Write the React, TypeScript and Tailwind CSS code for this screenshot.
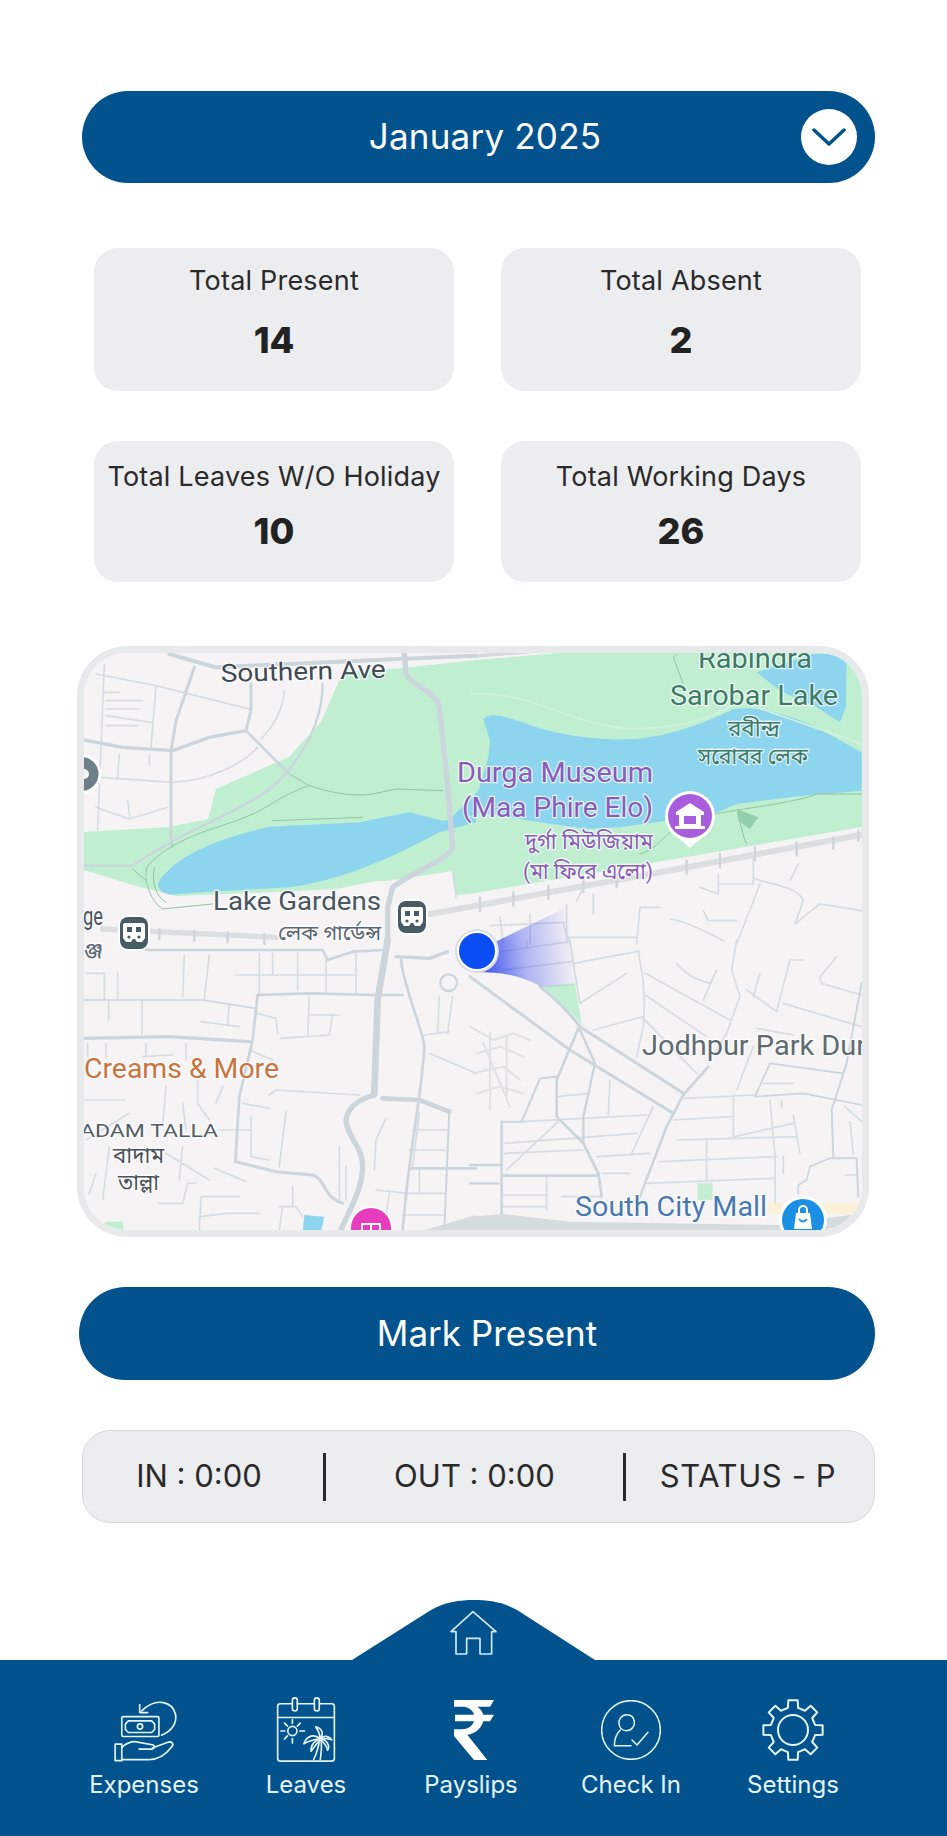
import type { ReactNode } from "react"

const BLUE = "#01528d"
const LINE = "#e6f4fd"

const stats = [
  [
    { label: "Total Present", value: "14", gap: "pt-[15px]", numGap: "mt-[19px]" },
    { label: "Total Absent", value: "2", gap: "pt-[15px]", numGap: "mt-[19px]" },
  ],
  [
    { label: "Total Leaves W/O Holiday", value: "10", gap: "pt-[18px]", numGap: "mt-[14px]" },
    { label: "Total Working Days", value: "26", gap: "pt-[18px]", numGap: "mt-[14px]" },
  ],
]

// gear outline, 8 teeth, drawn around 0,0
const gearPath = (() => {
  const pts: string[] = []
  const pt = (deg: number, r: number) => {
    const a = ((deg - 90) * Math.PI) / 180
    return `${(r * Math.cos(a)).toFixed(1)} ${(r * Math.sin(a)).toFixed(1)}`
  }
  for (let i = 0; i < 8; i++) {
    const a = i * 45
    pts.push(pt(a - 13, 68), pt(a - 9, 90), pt(a + 9, 90), pt(a + 13, 68))
  }
  return "M" + pts.join(" L") + " Z"
})()

const ExpensesIcon = () => (
  <svg width="70" height="68" viewBox="60 50 210 205" fill="none" stroke={LINE} strokeWidth="5" strokeLinecap="round" strokeLinejoin="round">
    <rect x="98" y="112" width="112" height="60" rx="4" />
    <path d="M118 125 H188 L197 134 V151 L188 160 H118 L109 151 V134 Z" />
    <circle cx="153" cy="142" r="8" />
    <path d="M218 168 C250 155 265 130 260 105 C252 70 205 50 158 95" />
    <path d="M152 76 L152 100 L176 100" />
    <path d="M78 195 H98 V245 H78 Z" />
    <path d="M98 205 C115 190 135 185 150 190 L190 197 C202 200 196 212 185 210 L150 210" />
    <path d="M190 207 L235 190 C250 185 256 195 248 204 C225 235 200 243 175 242 L98 242" />
  </svg>
)

const LeavesIcon = () => (
  <svg width="60" height="66" viewBox="555 50 183 200" fill="none" stroke={LINE} strokeWidth="5" strokeLinecap="round" strokeLinejoin="round">
    <path d="M605 70 H568 Q560 70 560 78 V237 Q560 245 568 245 H725 Q733 245 733 237 V78 Q733 70 725 70 H688 M620 70 H672" />
    <path d="M560 112 H733" />
    <rect x="605" y="52" width="15" height="40" rx="7.5" />
    <rect x="672" y="52" width="15" height="40" rx="7.5" />
    <circle cx="605" cy="153" r="14" />
    <path d="M605 118 V130 M605 176 V190 M570 153 H582 M628 153 H642 M581 129 L590 138 M629 129 L620 138 M581 177 L590 168" />
    <path d="M670 240 C682 215 686 195 688 178 M690 240 C694 215 695 195 692 178" />
    <path d="M690 176 C672 162 650 165 640 192 C655 182 668 180 690 176 Z" />
    <path d="M690 176 C675 180 660 195 662 215 C672 200 680 192 690 176 Z" />
    <path d="M690 176 C700 190 712 198 712 212 C722 198 708 178 690 176 Z" />
    <path d="M690 176 C705 165 715 168 725 180 C712 176 702 176 690 176 Z" />
    <path d="M690 176 C688 160 682 148 676 140 C695 145 702 160 690 176 Z" />
  </svg>
)

const RupeeIcon = () => (
  <svg width="40" height="60" viewBox="100 328 120 180" fill="#ffffff" className="ml-[6px]">
    <path d="M100 328 H220 L208 348 H170 C180 355 185 362 188 372 H220 L208 392 H188 C180 420 155 432 140 432 L200 508 H160 L100 436 V416 H125 C140 416 155 408 160 392 H103 V372 H160 C155 355 140 348 125 348 H100 Z" />
  </svg>
)

const CheckInIcon = () => (
  <svg width="60" height="60" viewBox="542 328 180 180" fill="none" stroke={LINE} strokeWidth="4.5" strokeLinecap="round" strokeLinejoin="round">
    <circle cx="632" cy="418" r="88" />
    <path d="M620 372 C602 372 594 388 596 400 C598 412 606 420 618 420 C634 420 644 406 642 392 C640 380 632 372 620 372 Z" />
    <path d="M600 418 C588 430 582 445 582 465 H632" />
    <path d="M635 448 L650 463 L683 425" />
  </svg>
)

const SettingsIcon = () => (
  <svg width="62" height="62" viewBox="-93 -93 186 186" fill="none" stroke={LINE} strokeWidth="6" strokeLinejoin="round">
    <path d={gearPath} />
    <circle cx="0" cy="0" r="45" />
  </svg>
)

const navItems = [
  { label: "Expenses", icon: <ExpensesIcon />, width: "w-[162px]" },
  { label: "Leaves", icon: <LeavesIcon />, width: "w-[162px]" },
  { label: "Payslips", icon: <RupeeIcon />, width: "w-[168px]" },
  { label: "Check In", icon: <CheckInIcon />, width: "w-[152px]" },
  { label: "Settings", icon: <SettingsIcon />, width: "w-[172px]" },
]

type Road = [string, number]

// paths are in the coordinates of a 3x crop, so each group gets scaled back
const Quad = ({ x, y, children }: { x: number; y: number; children: ReactNode }) => (
  <g transform={`translate(${x} ${y}) scale(0.3333)`} fill="none" strokeLinecap="round" strokeLinejoin="round">
    {children}
  </g>
)

const Roads = ({ thick, thin }: { thick: Road[]; thin: string }) => (
  <>
    <path d={thin} stroke="#d6dce1" strokeWidth="5" />
    {thick.map(([d, w], i) => (
      <path key={i} d={d} stroke="#ccd5dc" strokeWidth={w} />
    ))}
  </>
)

type LabelProps = {
  x: number
  y: number
  size: number
  color: string
  width?: number
  rotate?: number
  children: string
}

const Label = ({ x, y, size, color, width, rotate, children }: LabelProps) => (
  <text
    x={x}
    y={y}
    fontSize={size}
    fill={color}
    stroke="#ffffff"
    strokeWidth="2.5"
    strokeOpacity="0.75"
    textLength={width}
    lengthAdjust={width ? "spacingAndGlyphs" : undefined}
    transform={rotate ? `rotate(${rotate} ${x} ${y})` : undefined}
    className="[paint-order:stroke] font-['Roboto','Noto_Sans','Noto_Sans_Bengali',sans-serif]"
  >
    {children}
  </text>
)

const BusStop = ({ x, y }: { x: number; y: number }) => (
  <g>
    <rect x={x - 16} y={y - 18} width="32" height="36" rx="10" fill="#ffffff" />
    <rect x={x - 14} y={y - 16} width="28" height="32" rx="8" fill="#465b66" />
    <path d={`M${x - 9} ${y - 10} h18 a2 2 0 0 1 2 2 v13 l-3 4 h-5 l-2 -3 h-2 l-2 3 h-5 l-3 -4 v-13 a2 2 0 0 1 2 -2 z`} fill="#ffffff" />
    <rect x={x - 7} y={y - 6} width="5" height="5" fill="#465b66" />
    <rect x={x + 2} y={y - 6} width="5" height="5" fill="#465b66" />
    <circle cx={x - 5} cy={y + 4} r="1.6" fill="#465b66" />
    <circle cx={x + 5} cy={y + 4} r="1.6" fill="#465b66" />
  </g>
)

const MapView = () => (
  <svg viewBox="84 653 778 577" className="block w-full h-full" preserveAspectRatio="none">
    <defs>
      <linearGradient id="beam" gradientUnits="userSpaceOnUse" x1="484" y1="948" x2="572" y2="935">
        <stop offset="0" stopColor="#1f35ee" stopOpacity="0.8" />
        <stop offset="0.45" stopColor="#2f45ee" stopOpacity="0.35" />
        <stop offset="1" stopColor="#2f45ee" stopOpacity="0" />
      </linearGradient>
    </defs>

    <rect x="84" y="653" width="778" height="577" fill="#f5f3f4" />

    {/* park and lakes */}
    <path
      d="M343 672 L402 668 L476 660 L560 653 L862 653 L862 827 L470 894 L456 895 L453 871 L386 881 L376 881 L336 889 L276 892 L176 896 L136 886 L84 870 L84 832 L169 827 L208 819 L216 789 L289 757 L321 722 Z"
      fill="#bfefd0"
    />
    <Quad x={76} y={644}>
      <path
        d="M250 710 C300 640 400 590 580 548 L850 535 L1000 505 L1100 530 L1170 518 L1200 520 L1200 535 L1090 565 C950 640 800 710 640 730 L380 745 L280 752 C250 745 240 725 250 710 Z"
        fill="#8dd5ee"
      />
    </Quad>
    <Quad x={470} y={644}>
      <path
        d="M40 225 C60 205 90 210 200 250 C300 280 400 290 500 285 C600 275 700 240 790 195 C860 185 950 210 1040 250 L1175 325 V440 L1000 455 L800 480 L730 510 L590 530 L450 550 L350 555 L180 530 L30 505 L-30 530 L-60 525 L25 440 L55 340 L60 290 Z"
        fill="#8dd5ee"
      />
      <path d="M1030 30 L860 85 L930 140 L1040 190 L1110 235 L1128 190 L1130 30 Z" fill="#8dd5ee" />
      <path d="M0 150 C200 140 300 250 500 255 C650 250 720 220 780 190 M860 190 L1175 300" stroke="#d2f2de" strokeWidth="5" />
      <path d="M600 565 C570 590 550 620 510 630 M730 510 C850 490 1000 470 1040 450 L1175 450 M805 500 C810 540 820 580 830 600 M620 30 L610 40 L640 120" stroke="#8fc4a5" strokeWidth="3" />
      <path d="M800 495 L865 520 L840 555 L805 530 Z" fill="#93ceac" />
      <path d="M0 38 L170 24" stroke="#d3d9de" strokeWidth="10" />
    </Quad>

    {/* roads, top left */}
    <Quad x={76} y={644}>
      <path
        d="M640 390 L700 425 C760 445 830 460 890 450 L960 435 L1100 440 M700 425 C620 450 580 490 530 510 C450 550 300 570 215 665 C200 700 220 770 260 795 L410 780 M235 670 C225 710 240 760 270 775 M170 675 L210 710 M285 590 L290 610 M590 530 L860 520"
        stroke="#8fc4a5"
        strokeWidth="3"
      />
      <Roads
        thin="M60 90 L240 125 L520 195 M85 60 L65 560 M240 125 L225 310 M85 145 H130 M90 170 H200 M90 195 H190 M90 215 L225 235 M90 245 H185 M130 330 L125 400 M75 400 L290 415 C400 410 500 360 545 310 M625 140 C620 200 590 250 555 285 M220 330 V365 M60 490 L160 525 L275 490 M155 470 L162 525 M1130 680 L1140 760"
        thick={[
          ["M280 30 L420 70 L640 60 L970 45 L1200 35", 12],
          ["M985 30 L990 90 C1010 130 1080 140 1090 190 L1115 420 L1130 610 C1130 640 1000 690 950 730 L935 790 V900", 16],
          ["M355 70 L300 230 L285 320 L285 590", 9],
          ["M24 288 L140 310 L290 320 L400 280 L510 260", 10],
          ["M525 120 V200 L510 260", 9],
          ["M510 260 L640 390", 8],
          ["M740 120 C740 230 690 320 620 400 C540 490 350 540 170 665 L24 665", 7],
        ]}
      />
      <path d="M80 855 L600 880" stroke="#dcdee0" strokeWidth="16" />
      <path d="M250 855 V885 M355 860 V890 M455 865 V895 M565 870 V900" stroke="#cfd4d8" strokeWidth="7" />
    </Quad>

    {/* railway and small streets, top right */}
    <Quad x={470} y={644}>
      <path d="M-120 810 L640 672 L1175 572" stroke="#dcdee0" strokeWidth="18" />
      <path d="M30 760 V800 M130 745 V785 M235 725 V765 M340 705 V745 M440 690 V730 M650 650 V690 M750 630 V670 M855 610 V650 M980 595 V635 M1090 580 V615 M1165 560 V590" stroke="#cfd4d8" strokeWidth="7" />
      <Roads
        thin="M370 750 V810 M180 810 V900 M60 845 L290 835 M90 820 L100 900 M290 780 V900 M500 900 L510 790 H570 M600 825 C650 830 720 870 760 890 M690 730 L745 750 V690 M745 720 H850 L850 640 M850 700 C870 720 980 720 1000 770 L975 840 L1050 780 L1175 800 M985 660 L960 710 M800 900 L870 720 M280 840 L300 900 M290 880 H500 M700 800 L715 830 H800 M320 770 L340 730"
        thick={[]}
      />
    </Quad>

    {/* roads, bottom left */}
    <Quad x={76} y={940}>
      <path d="M685 825 L745 830 L735 875 L680 875 Z" fill="#8dd5ee" />
      <path d="M90 845 L142 845 V875 H60 Z" fill="#bfefd0" />
      <Roads
        thin="M325 45 L320 170 M400 45 L385 175 M550 40 V160 M590 40 V100 M665 40 V150 M750 60 V160 M840 40 V160 M480 105 H840 M98 180 V240 M198 180 V280 M460 195 L455 250 M375 245 L490 260 M545 220 L600 235 L605 280 M615 295 L760 285 L770 225 M700 170 L695 285 M700 225 H790 M30 100 H85 V180 M125 100 V180 M1090 170 L1085 280 M1130 170 L1115 280 M1045 285 L1120 275 M1060 340 L1200 400 M580 465 L600 450 L850 465 M500 490 L580 505 M525 530 V650 L580 660 M630 515 L610 680 M900 600 L895 690 M930 535 L900 600 M1030 520 L1010 680 M1010 570 H1115 M1000 630 H1110 M1030 690 V760 M985 760 H1105 M980 825 H1100 M370 870 L375 770 H490 M415 685 L510 725 M375 830 L450 820 H550 M620 800 L610 870 M610 800 H660 L680 830 M650 740 V795 M245 790 L320 790 L335 730 H360 M20 480 H145 M160 520 L30 600 M270 440 L260 560 M320 490 L330 570 M365 420 V490 L400 540 M440 440 L420 490 M200 350 L290 345 M35 310 V350 M90 310 V350 M210 310 V350 M330 310 V360 M520 330 L590 360 M320 620 L310 720 M430 570 H520 M270 640 L400 720 M790 620 V780 M810 680 V780 M900 750 L1000 760 M940 760 L930 830 M100 620 L80 780 M40 760 L60 700"
        thick={[
          ["M935 0 L905 180 L895 460", 20],
          ["M895 465 C840 480 810 510 810 545 C820 600 860 620 860 680 C860 750 810 830 795 870", 16],
          ["M920 475 L1030 480 L1120 515", 14],
          ["M1120 510 L1105 870", 6],
          ["M210 30 L740 30 L755 60 L830 35 L920 30", 8],
          ["M960 50 L1060 55 L1115 35", 10],
          ["M975 60 C985 150 1045 280 1045 320 C1040 450 1000 620 980 870", 8],
          ["M545 165 L700 160 L900 165 L980 165", 8],
          ["M545 165 L530 300 L490 470 L478 665", 8],
          ["M24 295 L280 290 L520 305", 10],
          ["M24 180 L380 180 L540 205", 5],
          ["M478 665 L600 695 L710 705 C750 720 740 770 800 790", 9],
          ["M1000 685 H1200", 8],
        ]}
      />
      <circle cx="1118" cy="128" r="25" fill="none" stroke="#ccd5dc" strokeWidth="7" />
      <path d="M1030 875 L1200 825 V875 Z" fill="#d5dcde" />
    </Quad>

    {/* roads, bottom right */}
    <Quad x={470} y={940}>
      <path d="M215 140 L315 130 L335 255 C290 200 250 170 215 140 Z" fill="#bfefd0" />
      <rect x="682" y="730" width="46" height="50" fill="#c4edd0" />
      <rect x="890" y="790" width="285" height="32" fill="#fbf0d8" />
      <path d="M0 830 L100 822 L300 845 L930 855 L1175 820 V875 H0 Z" fill="#d5dcde" />
      <path
        d="M0 260 L70 300 L130 280 L180 300 M20 340 L90 320 L160 350 M10 400 L100 380 L150 420 M20 460 L90 440 L160 460 M60 280 V510 M110 290 V470 M40 310 L120 500"
        stroke="#e0e1e3"
        strokeWidth="6"
      />
      <Roads
        thin="M90 35 L300 5 M100 90 L305 65 M170 0 V20 M300 0 L310 70 L330 190 M310 70 L500 35 M330 190 L470 100 M370 270 L520 230 M505 30 C510 80 530 130 520 260 L500 350 M525 100 L780 240 M525 165 L710 290 M520 235 L680 400 M620 70 C650 110 700 125 720 130 L740 90 L700 180 M800 0 L785 90 L810 170 L770 280 L730 345 M830 150 L920 215 L960 60 L1000 60 M870 100 L850 170 M940 190 L1175 260 M1100 50 L1050 110 L1055 130 L1175 165 M860 265 L970 285 M850 320 L800 450 M790 465 V590 M640 475 L855 465 M610 540 L785 530 M620 600 L980 590 M570 665 L920 650 M530 730 L910 715 M710 600 V725 M900 480 L915 650 V790 M935 480 V505 M970 525 L990 640 M940 650 V700 M795 590 L970 550 M880 430 H970 M155 545 L530 525 M105 610 L500 580 M110 690 L270 540 M105 640 L340 630 M380 650 L540 640 M485 640 L550 500 M420 420 L415 525 M260 470 L360 460 M230 710 V810 M100 765 H225 M100 800 H225 M395 700 H480 M275 770 H390 M1125 500 L1175 545 M1140 545 L1150 640 M1125 705 H1160"
        thick={[
          ["M0 110 L300 330 L610 520", 9],
          ["M210 140 C260 180 300 220 330 260 L640 460", 9],
          ["M325 265 L260 420 L260 530 L340 610 L385 700 L395 770", 8],
          ["M330 270 L375 370 L340 530 V610", 7],
          ["M715 380 L640 465 L590 560 L510 770", 8],
          ["M100 545 H155 L210 415 L260 410", 6],
          ["M95 545 V820", 8],
          ["M0 675 H90", 8],
          ["M100 707 H380", 8],
          ["M0 730 H85", 7],
          ["M1080 655 H1160 L1165 770", 6],
          ["M1080 655 L1020 680 L1010 720 L985 735 V760", 5],
          ["M1175 130 L1130 370 L1085 510 L1090 650", 6],
          ["M1175 495 L1000 460 L855 470 L900 370 L1120 400", 5],
        ]}
      />
    </Quad>

    {/* place names */}
    <Label x={221} y={682} size={25} color="#3f4a54" width={165} rotate={-1.5}>Southern Ave</Label>
    <Label x={213} y={910} size={26} color="#4a5660" width={168}>Lake Gardens</Label>
    <Label x={278} y={940} size={20} color="#5a6670" width={103}>লেক গার্ডেন্স</Label>
    <Label x={83} y={925} size={26} color="#4a5660" width={20}>ge</Label>
    <Label x={84} y={957} size={20} color="#5a6670" width={19}>ঞ্জ</Label>
    <Label x={457} y={782} size={28} color="#8a5bb8" width={196}>Durga Museum</Label>
    <Label x={462} y={817} size={28} color="#8a5bb8" width={191}>(Maa Phire Elo)</Label>
    <Label x={525} y={849} size={22} color="#8a5bb8" width={128}>দুর্গা মিউজিয়াম</Label>
    <Label x={523} y={879} size={22} color="#8a5bb8" width={130}>(মা ফিরে এলো)</Label>
    <Label x={698} y={668} size={28} color="#3d7a68" width={114}>Rabindra</Label>
    <Label x={670} y={705} size={28} color="#3d7a68" width={168}>Sarobar Lake</Label>
    <Label x={728} y={736} size={22} color="#3d7a68" width={52}>রবীন্দ্র</Label>
    <Label x={698} y={764} size={22} color="#3d7a68" width={110}>সরোবর লেক</Label>
    <Label x={642} y={1055} size={28} color="#5f6b70" width={224}>Jodhpur Park Dur</Label>
    <Label x={84} y={1078} size={28} color="#c8743f" width={195}>Creams & More</Label>
    <Label x={80} y={1137} size={19} color="#555f66" width={138}>ADAM TALLA</Label>
    <Label x={113} y={1163} size={22} color="#4a5258" width={51}>বাদাম</Label>
    <Label x={118} y={1190} size={22} color="#4a5258" width={41}>তাল্লা</Label>
    <Label x={575} y={1216} size={28} color="#4878b0" width={192}>South City Mall</Label>

    {/* pins */}
    <circle cx="81.5" cy="774" r="18.5" fill="#6d8088" stroke="#ffffff" strokeWidth="3" />
    <circle cx="84" cy="774" r="5" fill="#f5f3f4" />
    <BusStop x={134} y={933} />
    <BusStop x={412} y={917} />

    <path d="M668 829 L690 848 L712 829 Z" fill="#ffffff" />
    <circle cx="690" cy="816" r="25" fill="#ffffff" />
    <circle cx="690" cy="816" r="22" fill="#a85ddc" />
    <path d="M676 812 L690 803 L704 812 V815 H701 V826 H705 V829 H675 V826 H679 V815 H676 Z" fill="#ffffff" />
    <rect x="684" y="816" width="12" height="8" fill="#a85ddc" />

    <circle cx="371" cy="1228" r="22" fill="#ffffff" />
    <circle cx="371" cy="1228" r="20" fill="#e83cbe" />
    <path d="M362 1230 V1224 H380 V1230 M371 1224 V1230" fill="none" stroke="#ffffff" strokeWidth="2" />

    <circle cx="803" cy="1220" r="24" fill="#ffffff" />
    <circle cx="803" cy="1220" r="21" fill="#1a8fe3" />
    <path d="M796 1213 H810 L812 1229 H794 Z" fill="#ffffff" />
    <path d="M799 1213 V1210 A4 4 0 0 1 807 1210 V1213" fill="none" stroke="#ffffff" strokeWidth="2" />
    <path d="M799 1219 Q803 1224 807 1219" fill="none" stroke="#1a8fe3" strokeWidth="1.8" />

    {/* location beam and dot */}
    <path d="M477 951 L575 903 L578 985 L542 987 C520 975 500 972 477 972 Z" fill="url(#beam)" />
    <circle cx="477" cy="951" r="22" fill="#d8dde2" />
    <circle cx="477" cy="951" r="20" fill="#ffffff" />
    <circle cx="477" cy="951" r="18" fill="#0a4df2" />
  </svg>
)

const App = () => {
  return (
    <div className="w-[947px] h-[1836px] bg-white overflow-hidden flex flex-col pt-[91px] font-['Inter',sans-serif]">
      {/* month picker */}
      <div className="relative ml-[82px] w-[793px] h-[92px] rounded-full bg-[#01528d] flex items-center justify-center pl-[13px] pb-[2px]">
        <span className="text-[35px] text-white tracking-[0.2px]">January 2025</span>
        <div className="absolute right-[18px] top-[18px] w-[56px] h-[56px] rounded-full bg-white flex items-center justify-center">
          <svg width="34" height="18" viewBox="0 0 34 18" fill="none" stroke={BLUE} strokeWidth="3.5" strokeLinecap="round" strokeLinejoin="round">
            <path d="M2 2 L17 16 L32 2" />
          </svg>
        </div>
      </div>

      {/* totals */}
      <div className="ml-[94px] w-[767px] mt-[65px] flex flex-col gap-[50px]">
        {stats.map((row, i) => (
          <div key={i} className={`grid grid-cols-2 gap-x-[47px] ${i === 0 ? "h-[143px]" : "h-[141px]"}`}>
            {row.map((s) => (
              <div key={s.label} className={`rounded-[24px] bg-[#ecedef] flex flex-col items-center ${s.gap}`}>
                <div className="text-[27px] tracking-[0.2px] leading-[36px] text-[#2a2a2a] whitespace-nowrap">{s.label}</div>
                <div className={`text-[36px] leading-[44px] font-extrabold text-[#222222] ${s.numGap}`}>{s.value}</div>
              </div>
            ))}
          </div>
        ))}
      </div>

      {/* map */}
      <div className="ml-[77px] w-[792px] h-[591px] mt-[64px] rounded-[50px] border-[7px] border-[#e8e9eb] overflow-hidden shrink-0">
        <MapView />
      </div>

      <button className="ml-[79px] w-[796px] h-[93px] mt-[50px] rounded-full bg-[#01528d] text-white text-[35px] pl-[20px] shrink-0">
        Mark Present
      </button>

      {/* in / out / status */}
      <div className="ml-[82px] w-[793px] h-[93px] mt-[50px] rounded-[28px] bg-[#ecedef] border border-[#d8d9db] flex items-center text-[31px] text-[#2a2a2a] shrink-0">
        <div className="w-[240px] text-center pr-[8px]">IN : 0:00</div>
        <div className="w-[3px] h-[48px] bg-[#2a2a2a]" />
        <div className="w-[297px] text-center">OUT : 0:00</div>
        <div className="w-[3px] h-[48px] bg-[#2a2a2a]" />
        <div className="flex-1 text-center pr-[4px] whitespace-nowrap tracking-[0.6px]">STATUS - P</div>
      </div>

      {/* bottom nav */}
      <nav className="relative mt-[137px] h-[176px] bg-[#01528d] flex items-start pl-[63px] pt-[39px] shrink-0">
        <svg className="absolute left-[352px] top-[-60px]" width="244" height="61" viewBox="352 1600 244 61">
          <path d="M352 1661 L352 1660 L431 1610 C445 1602 460 1600 474 1600 C488 1600 503 1602 517 1610 L595 1660 L595 1661 Z" fill={BLUE} />
          <g transform="translate(420 1590) scale(0.3333)" fill="none" stroke="#d3e8f8" strokeWidth="5" strokeLinejoin="round">
            <path d="M159 65 L228 125 H215 V192 H180 V145 H140 V192 H108 V125 H93 Z" />
          </g>
        </svg>
        {navItems.map((item) => (
          <div key={item.label} className={`${item.width} flex flex-col items-center`}>
            <div className="h-[62px] flex items-center justify-center">{item.icon}</div>
            <div className="mt-[8px] text-[24px] leading-[32px] text-[#e6f4fd] whitespace-nowrap">{item.label}</div>
          </div>
        ))}
      </nav>
    </div>
  )
}

export default App
